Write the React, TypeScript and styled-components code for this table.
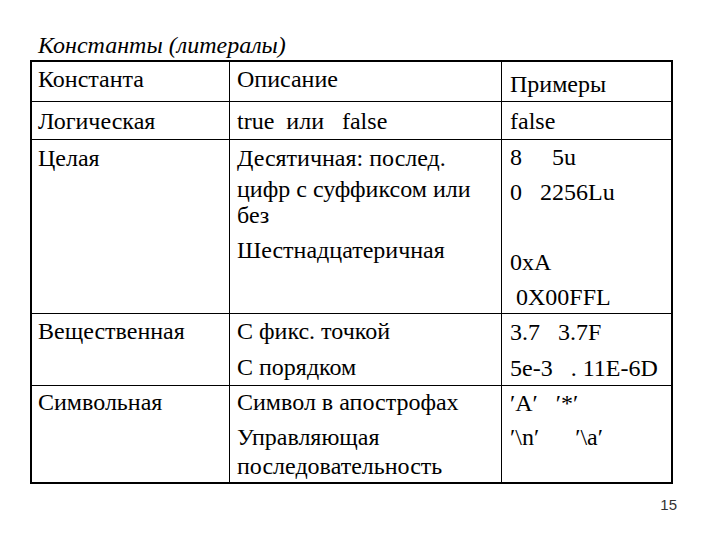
import React from "react";
import styled, { createGlobalStyle } from "styled-components";

const GlobalStyle = createGlobalStyle`
  html, body {
    margin: 0;
    padding: 0;
    background: #ffffff;
  }
  body {
    font-family: "Liberation Serif", "Times New Roman", serif;
    color: #000000;
  }
`;

const Slide = styled.div`
  width: 720px;
  height: 540px;
  box-sizing: border-box;
  padding: 32px 0 0 30px;
  display: flex;
  flex-direction: column;
`;

const Title = styled.div`
  font-style: italic;
  font-size: 24px;
  line-height: 26px;
  height: 28px;
  padding-left: 8px;
`;

const Table = styled.div`
  width: 643px;
  box-sizing: border-box;
  border: 2px solid #000;
  display: flex;
  flex-direction: column;
`;

const Row = styled.div<{ $h: number; $last?: boolean }>`
  display: grid;
  grid-template-columns: 198px 272px 1fr;
  height: ${(p) => p.$h}px;
  box-sizing: border-box;
  border-bottom: ${(p) => (p.$last ? "none" : "1px solid #000")};
`;

const Cell = styled.div<{ $pt: number; $pl?: number; $last?: boolean }>`
  box-sizing: border-box;
  padding: ${(p) => p.$pt}px 0 0 ${(p) => p.$pl ?? 6}px;
  border-right: ${(p) => (p.$last ? "none" : "1px solid #000")};
  font-size: 24px;
  overflow: hidden;
`;

const Line = styled.div<{ $mt?: number }>`
  line-height: 26px;
  margin-top: ${(p) => p.$mt ?? 0}px;
  white-space: pre;
`;

const PageNo = styled.div`
  align-self: flex-end;
  margin: 13px 43px 0 0;
  font-family: "Liberation Sans", Arial, sans-serif;
  font-size: 15px;
  line-height: 16px;
  color: #333;
`;

export default function App() {
  return (
    <>
      <GlobalStyle />
      <Slide>
        <Title>Константы (литералы)</Title>
        <Table>
          <Row $h={40}>
            <Cell $pt={4}>
              <Line>Константа</Line>
            </Cell>
            <Cell $pt={4} $pl={7}>
              <Line>Описание</Line>
            </Cell>
            <Cell $pt={9} $pl={8} $last>
              <Line>Примеры</Line>
            </Cell>
          </Row>
          <Row $h={38}>
            <Cell $pt={6}>
              <Line>Логическая</Line>
            </Cell>
            <Cell $pt={6} $pl={7}>
              <Line>{"true  или   false"}</Line>
            </Cell>
            <Cell $pt={6} $pl={8} $last>
              <Line>false</Line>
            </Cell>
          </Row>
          <Row $h={174}>
            <Cell $pt={5}>
              <Line>Целая</Line>
            </Cell>
            <Cell $pt={5} $pl={7}>
              <Line>Десятичная: послед.</Line>
              <Line $mt={5}>цифр с суффиксом или</Line>
              <Line>без</Line>
              <Line $mt={9}>Шестнадцатеричная</Line>
            </Cell>
            <Cell $pt={4} $pl={8} $last>
              <Line>{"8     5u"}</Line>
              <Line $mt={9}>{"0   2256Lu"}</Line>
              <Line $mt={44}>0xA</Line>
              <Line $mt={9}>{" 0X00FFL"}</Line>
            </Cell>
          </Row>
          <Row $h={72}>
            <Cell $pt={4}>
              <Line>Вещественная</Line>
            </Cell>
            <Cell $pt={4} $pl={7}>
              <Line>С фикс. точкой</Line>
              <Line $mt={10}>С порядком</Line>
            </Cell>
            <Cell $pt={5} $pl={8} $last>
              <Line>{"3.7   3.7F"}</Line>
              <Line $mt={10}>{"5e-3   . 11E-6D"}</Line>
            </Cell>
          </Row>
          <Row $h={96} $last>
            <Cell $pt={3}>
              <Line>Символьная</Line>
            </Cell>
            <Cell $pt={3} $pl={7}>
              <Line>Символ в апострофах</Line>
              <Line $mt={9}>Управляющая</Line>
              <Line $mt={3}>последовательность</Line>
            </Cell>
            <Cell $pt={4} $pl={8} $last>
              <Line>{"′A′   ′*′"}</Line>
              <Line $mt={8}>{"′\\n′      ′\\a′"}</Line>
            </Cell>
          </Row>
        </Table>
        <PageNo>15</PageNo>
      </Slide>
    </>
  );
}
